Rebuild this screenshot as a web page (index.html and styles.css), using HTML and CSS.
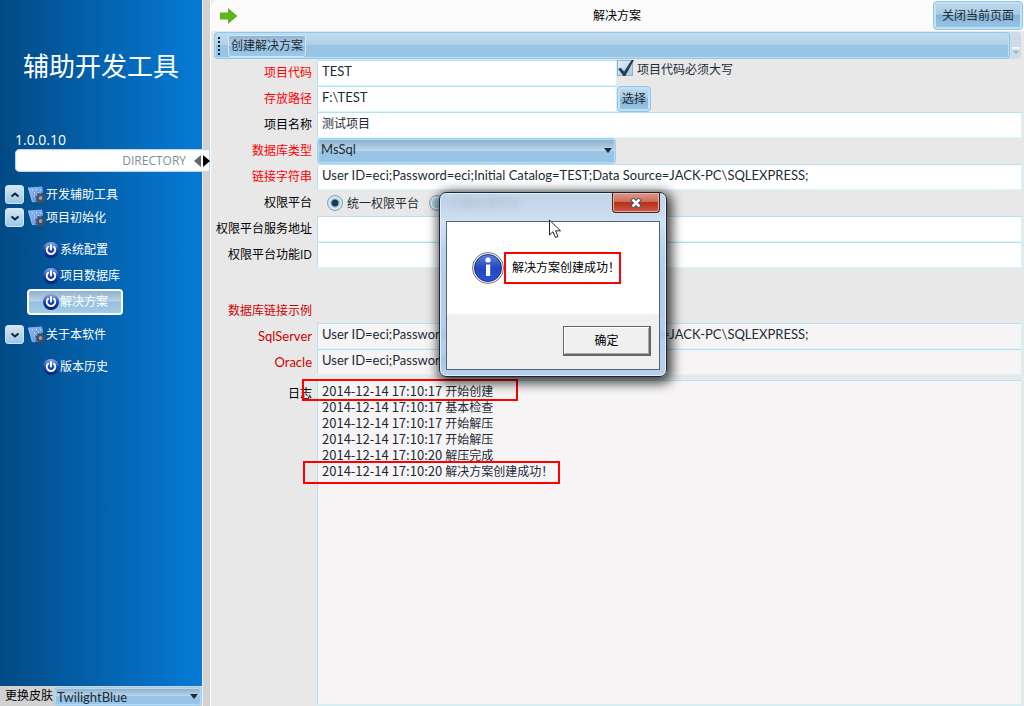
FILE: index.html
```html
<!DOCTYPE html>
<html lang="zh-CN">
<head>
  <meta charset="UTF-8">
  <meta name="viewport" content="width=device-width, initial-scale=1.0">
  <title>辅助开发工具</title>
  <link rel="stylesheet" href="styles.css">
</head>
<body>
  <!-- shared icons -->
  <svg class="defs" aria-hidden="true">
    <defs>
      <linearGradient id="orb" x1="0" y1="0" x2="0" y2="1">
        <stop offset="0" stop-color="#8fabea"/>
        <stop offset="0.5" stop-color="#1c44b5"/>
        <stop offset="1" stop-color="#0a1c76"/>
      </linearGradient>
      <linearGradient id="info" x1="0" y1="0" x2="0" y2="1">
        <stop offset="0" stop-color="#5c86e0"/>
        <stop offset="0.5" stop-color="#2346bd"/>
        <stop offset="1" stop-color="#2a55d8"/>
      </linearGradient>
      <linearGradient id="sheet" x1="0" y1="0" x2="1" y2="1">
        <stop offset="0" stop-color="#8fb8ee"/>
        <stop offset="1" stop-color="#5c92e2"/>
      </linearGradient>
    </defs>
    <symbol id="icon-power" viewBox="0 0 16 16">
      <circle cx="8" cy="8" r="8" fill="url(#orb)"/>
      <path d="M5 4.800a4.200 4.200 0 1 0 6 0" fill="none" stroke="#fff" stroke-width="2" stroke-linecap="round"/>
      <path d="M8 3v4.500" stroke="#fff" stroke-width="2" stroke-linecap="round"/>
    </symbol>
    <symbol id="icon-config" viewBox="0 0 18 18">
      <path d="M0 1.500l14-1 1 4-1 10-9 2z" fill="url(#sheet)"/>
      <path d="M.5 2l4 14" stroke="#a3bede" stroke-width="1"/>
      <path d="M4 4h1M8 3.500h1M12 4h1M6 7h1M10 6.500h1M6 10h1" stroke="#e4f0ff" stroke-width="1"/>
      <circle cx="12.500" cy="12" r="3" fill="none" stroke="#4b4d52" stroke-width="2.400"/>
      <circle cx="12.500" cy="12" r="4.700" fill="none" stroke="#4b4d52" stroke-width="1.400" stroke-dasharray="1.900 1.790"/>
      <circle cx="12.500" cy="12" r="1.800" fill="#7fa4dc"/>
    </symbol>
  </svg>

  <div class="app">
    <aside class="sidebar">
      <div class="nav-panel">
        <h1>辅助开发工具</h1>
        <p class="version">1.0.0.10</p>
        <div class="directory">
          <span>DIRECTORY</span>
          <svg width="16" height="12" viewBox="0 0 16 12" aria-hidden="true">
            <path d="M7 0v12L0 6z" fill="#666"/>
            <path d="M9 0v12l7-6z" fill="#000"/>
          </svg>
        </div>

        <nav class="tree">
          <div class="tree-group">
            <button class="expander" type="button" aria-label="展开"><svg width="10" height="10" viewBox="0 0 10 10"><path d="M1.5 6.5L5 3.5l3.5 3" fill="none" stroke="#123" stroke-width="2"/></svg></button>
            <svg class="group-icon"><use href="#icon-config"/></svg>
            <a href="#">开发辅助工具</a>
          </div>
          <div class="tree-group">
            <button class="expander" type="button" aria-label="收起"><svg width="10" height="10" viewBox="0 0 10 10"><path d="M1.5 3.5L5 6.5l3.5-3" fill="none" stroke="#123" stroke-width="2"/></svg></button>
            <svg class="group-icon"><use href="#icon-config"/></svg>
            <a href="#">项目初始化</a>
          </div>
          <ul class="tree-items">
            <li><a href="#"><svg><use href="#icon-power"/></svg>系统配置</a></li>
            <li><a href="#"><svg><use href="#icon-power"/></svg>项目数据库</a></li>
            <li><a class="selected" href="#"><svg><use href="#icon-power"/></svg>解决方案</a></li>
          </ul>
          <div class="tree-group">
            <button class="expander" type="button" aria-label="收起"><svg width="10" height="10" viewBox="0 0 10 10"><path d="M1.5 3.5L5 6.5l3.5-3" fill="none" stroke="#123" stroke-width="2"/></svg></button>
            <svg class="group-icon"><use href="#icon-config"/></svg>
            <a href="#">关于本软件</a>
          </div>
          <ul class="tree-items">
            <li><a href="#"><svg><use href="#icon-power"/></svg>版本历史</a></li>
          </ul>
        </nav>
      </div>

      <div class="skin">
        <label for="skin">更换皮肤</label>
        <div class="select">
          <select id="skin"><option>TwilightBlue</option></select>
        </div>
      </div>
    </aside>

    <div class="splitter"></div>

    <main>
      <header class="page-header">
        <svg class="arrow" width="18" height="16" viewBox="0 0 18 16" aria-hidden="true">
          <path d="M0 4.500h8V0l9.500 8L8 16v-4.500H0z" fill="#62b51c"/>
        </svg>
        <h2>解决方案</h2>
        <button class="glass" type="button">关闭当前页面</button>
      </header>

      <div class="toolbar-row">
        <div class="toolbar">
          <span class="grip"></span>
          <button type="button">创建解决方案</button>
        </div>
        <span class="overflow"><svg width="8" height="8" viewBox="0 0 8 8"><path d="M0 1h8" stroke="#fff" stroke-width="1.500"/><path d="M1 4h6L4 7z" fill="#aaa"/></svg></span>
      </div>

      <form class="fields">
        <label class="required" for="code">项目代码</label>
        <div class="cell">
          <input class="short" type="text" id="code" value="TEST">
          <span class="check"><input type="checkbox" id="upper" checked><label for="upper">项目代码必须大写</label></span>
        </div>

        <label class="required" for="path">存放路径</label>
        <div class="cell">
          <input class="short" type="text" id="path" value="F:\TEST">
          <button class="glass choose" type="button">选择</button>
        </div>

        <label for="name">项目名称</label>
        <input class="cjk" type="text" id="name" value="测试项目">

        <label class="required" for="dbtype">数据库类型</label>
        <div class="select short">
          <select id="dbtype"><option>MsSql</option></select>
        </div>

        <label class="required" for="conn">链接字符串</label>
        <input type="text" id="conn" value="User ID=eci;Password=eci;Initial Catalog=TEST;Data Source=JACK-PC\SQLEXPRESS;">

        <span class="caption">权限平台</span>
        <div class="cell radios">
          <input type="radio" name="platform" id="unified" checked><label for="unified">统一权限平台</label>
          <input type="radio" name="platform" id="builtin"><label for="builtin">内置权限平台</label>
        </div>

        <label for="service">权限平台服务地址</label>
        <input type="text" id="service">

        <label for="function">权限平台功能ID</label>
        <input type="text" id="function">

        <span class="caption example">数据库链接示例</span>

        <label class="sample latin" for="sqlserver">SqlServer</label>
        <input class="readonly" type="text" id="sqlserver" readonly value="User ID=eci;Password=eci;Initial Catalog=TEST;Data Source=JACK-PC\SQLEXPRESS;">

        <label class="sample latin" for="oracle">Oracle</label>
        <input class="readonly" type="text" id="oracle" readonly value="User ID=eci;Password=eci;Data Source=ORCL;">

        <span class="caption log-caption" id="log-label">日志</span>
        <ol class="log" role="log" aria-labelledby="log-label">
          <li class="mark-first"><time>2014-12-14 17:10:17</time> 开始创建</li>
          <li><time>2014-12-14 17:10:17</time> 基本检查</li>
          <li><time>2014-12-14 17:10:17</time> 开始解压</li>
          <li><time>2014-12-14 17:10:17</time> 开始解压</li>
          <li><time>2014-12-14 17:10:20</time> 解压完成</li>
          <li class="mark-last"><time>2014-12-14 17:10:20</time> 解决方案创建成功！</li>
        </ol>
      </form>
    </main>
  </div>

  <div class="dialog" role="alertdialog" aria-labelledby="message">
    <div class="titlebar">
      <button class="close" type="button" aria-label="关闭">
        <svg width="12" height="10" viewBox="0 0 12 10"><path d="M2 1l8 8M10 1L2 9" stroke="#444b5a" stroke-width="4.500"/><path d="M2.500 1.500l7 7M9.500 1.500l-7 7" stroke="#fff" stroke-width="2.500"/></svg>
      </button>
    </div>
    <div class="dialog-body">
      <div class="message">
        <svg width="32" height="32" viewBox="0 0 32 32" aria-hidden="true">
          <circle cx="16" cy="16" r="15.500" fill="#f4f4f4" stroke="#777"/>
          <circle cx="16" cy="16" r="13.500" fill="url(#info)" stroke="#1a2f8c"/>
          <circle cx="16" cy="8" r="2.600" fill="#fff"/>
          <path d="M14 12.500h4.200V24h-4.200z" fill="#fff"/>
        </svg>
        <p id="message">解决方案创建成功！</p>
      </div>
      <div class="actions"><button type="button">确定</button></div>
    </div>
  </div>

  <svg class="cursor" width="13" height="20" viewBox="0 0 13 20" aria-hidden="true">
    <path d="M.5 1v15l3.500-3.300 2.500 5.800 2.500-1.100-2.500-5.600h5z" fill="#fff" stroke="#222"/>
  </svg>
</body>
</html>
```

FILE: styles.css
```css
*, *::before, *::after {
  margin: 0;
  padding: 0;
  box-sizing: border-box;
}

body {
  font-family: "Open Sans", "Noto Sans CJK SC", sans-serif;
  font-size: 12px;
  line-height: 16px;
  color: #000;
  background: #e8e8e8;
}

button, input, select {
  font: inherit;
  color: #1c2a35;
}

a {
  color: #fff;
  text-decoration: none;
}

.defs {
  position: absolute;
  width: 0;
  height: 0;
}

.app {
  display: flex;
  min-height: 100vh;
}

/* sidebar */
.sidebar {
  width: 202px;
  display: flex;
  flex-direction: column;
  background: #d2d2d2;
}

.nav-panel {
  flex: 1;
  background: linear-gradient(to right, #024a85, #057bd6);
  color: #fff;
}

h1 {
  padding: 46px 0 0 23px;
  font-size: 26px;
  font-weight: normal;
  line-height: 40px;
}

.version {
  margin-top: 45px;
  padding-left: 15px;
  font-size: 14px;
  line-height: 18px;
}

.directory {
  position: relative;
  display: flex;
  align-items: center;
  justify-content: flex-end;
  gap: 8px;
  height: 23px;
  margin: 0 -8px 0 15px;
  background: #fff;
  border-radius: 5px 0 0 5px;
  box-shadow: inset 0 0 1px 1px #b5cfe8;
  color: #7b9096;
}

.tree {
  padding: 11px 0 0 5px;
}

.tree-group {
  display: flex;
  align-items: center;
  height: 23px;
}

.expander {
  display: flex;
  align-items: center;
  justify-content: center;
  width: 19px;
  height: 19px;
  border: 1px solid #cfe6f6;
  border-radius: 3px;
  background: linear-gradient(#d3e6f3, #9cc8e6);
}

.group-icon {
  width: 18px;
  height: 18px;
  margin-left: 4px;
}

.tree-items {
  list-style: none;
  padding: 8px 0 8px 22px;
}

.tree-items a {
  display: flex;
  align-items: center;
  gap: 1px;
  width: 96px;
  height: 26px;
  padding-left: 16px;
}

.tree-items svg {
  width: 16px;
  height: 16px;
}

.tree-items .selected {
  padding-left: 14px;
  border: 2px solid #fff;
  border-radius: 4px;
  background: linear-gradient(#8fb0cb, #b9d2e4 45%, #94c0e0 50%, #a3cbe8);
}

.skin {
  display: flex;
  align-items: center;
  height: 20px;
  padding-left: 5px;
}

.skin .select {
  flex: 1;
  height: 19px;
  margin-left: 1px;
}

/* glossy drop-down */
.select {
  position: relative;
  height: 26px;
}

.select select {
  display: block;
  width: 100%;
  height: 100%;
  padding: 0 3px 5px;
  appearance: none;
  border: 1px solid #9bd0f2;
  border-radius: 4px;
  box-shadow: inset 0 0 0 1px #b9daf0;
  background: linear-gradient(#86acc8, #bcd7ea 48%, #98c5e6 50%, #98c5e6);
  font-family: Lato, "Noto Sans CJK SC", sans-serif;
  font-size: 13px;
  line-height: 18px;
}

.skin .select select {
  padding: 0 2px;
}

.select::after {
  content: "";
  position: absolute;
  right: 4px;
  top: 40%;
  border: 4px solid transparent;
  border-top: 5px solid #1c2a35;
  border-bottom: 0;
}

.splitter {
  width: 9px;
  background: #d2d2d2;
  border-left: 1px solid #eee;
  border-right: 1px solid #fff;
}

/* page */
main {
  flex: 1;
  min-width: 0;
  display: flex;
  flex-direction: column;
}

.page-header {
  display: grid;
  grid-template-columns: 90px 1fr 90px;
  align-items: center;
  height: 32px;
  padding-right: 1px;
  background: #fbfbfb;
  border-radius: 6px 0 0 0;
  border-bottom: 1px solid #e8e8e8;
}

.arrow {
  margin-left: 9px;
}

h2 {
  font-size: 12px;
  font-weight: normal;
  text-align: center;
}

.glass {
  height: 29px;
  border: 1px solid #8fc6ec;
  border-radius: 4px;
  box-shadow: inset 0 0 0 2px #c4e0f4;
  background: linear-gradient(#c3dbec, #a9cbe4 45%, #86b3d5 50%, #9ac8e8);
  white-space: nowrap;
}

.toolbar-row {
  display: flex;
  height: 27px;
  margin: 0 3px;
  background: #cddbe6;
  border-radius: 4px;
}

.toolbar {
  flex: 1;
  display: flex;
  align-items: center;
  padding-left: 3px;
  border: 1px solid #8ec6ec;
  border-radius: 4px;
  box-shadow: inset 0 0 0 1px #b9def5;
  background: linear-gradient(#c2dbec, #b0d0e8 48%, #98c5e6 50%, #98c5e6);
}

.grip {
  width: 2px;
  height: 18px;
  background: repeating-linear-gradient(#123 0 2px, transparent 2px 4px);
}

.toolbar button {
  height: 22px;
  margin-left: 8px;
  padding: 0 2px;
  border: 1px solid #d3e8f6;
  border-radius: 3px;
  background: linear-gradient(#8fb4d0, #b4d1e6 45%, #94bedf 50%, #9ac8e8);
}

.overflow {
  align-self: flex-end;
  width: 11px;
  height: 12px;
  padding-left: 2px;
  line-height: 8px;
}

/* form */
.fields {
  flex: 1;
  display: grid;
  grid-template-columns: 101px 1fr;
  grid-template-rows: repeat(8, 26px) 55px 26px 26px 1fr;
  column-gap: 5px;
  padding: 1px 2px 1px 0;
}

.fields > label, .caption {
  padding-top: 5px;
  text-align: right;
  white-space: nowrap;
}

.fields > .required {
  color: #f00;
}

.fields > .sample, .caption.example {
  color: #d00000;
}

.fields > .latin {
  font-family: Lato, sans-serif;
  font-size: 13px;
}

.fields input[type="text"] {
  width: 100%;
  height: 26px;
  padding: 0 4px 5px;
  border: 1px solid #b8e0f5;
  border-right-color: #c8f8fc;
  border-bottom-color: #d5fafd;
  background: #fff;
  font-family: Lato, "Noto Sans CJK SC", sans-serif;
  font-size: 13px;
}

.fields input.cjk {
  font-size: 12px;
}

.fields input.readonly {
  background: #f6f4f5;
}

.fields .short, .fields input.short {
  flex: none;
  width: 300px;
}

.fields .select.short {
  width: 299px;
}

.cell {
  display: flex;
}

.choose {
  width: 34px;
  height: 26px;
}

.check {
  display: flex;
  gap: 4px;
}

.check label {
  padding-top: 2px;
  color: #1c2a35;
  white-space: nowrap;
}

.check input {
  position: relative;
  width: 16px;
  height: 16px;
  appearance: none;
  border: 1px solid #8fb2cc;
  background: linear-gradient(135deg, #e5eff6, #a9cbe2);
}

.check input:checked::after {
  content: "";
  position: absolute;
  left: 0;
  top: -1px;
  width: 16px;
  height: 16px;
  background: #2b3f50;
  clip-path: polygon(0 55%, 18% 50%, 38% 72%, 85% 0, 100% 0, 46% 100%, 34% 100%);
}

.radios {
  align-items: center;
  padding-left: 10px;
}

.radios input {
  width: 16px;
  height: 16px;
  appearance: none;
  border: 1px solid #7ba3bf;
  border-radius: 50%;
  box-shadow: inset 0 0 0 2px #d8eaf6;
  background: #a9cce4;
}

.radios input:checked {
  background: radial-gradient(circle, #24384a 3px, #a9cce4 4px);
}

.radios label {
  margin: 2px 10px 0 4px;
  color: #1c2a35;
}

.caption.example {
  grid-column: 1;
  padding-top: 35px;
}

.fields .example + label {
  grid-column: 1;
}

.log-caption {
  padding-top: 11px;
}

.log {
  margin-top: 5px;
  padding: 3px 4px;
  list-style: none;
  border: 1px solid #b8e0f5;
  border-right-color: #c8f8fc;
  border-bottom-color: #c8f8fc;
  background: #f6f4f5;
  color: #1c2a35;
}

.log li {
  position: relative;
  height: 16px;
}

time {
  font-family: "Noto Sans CJK SC", sans-serif;
  font-size: 13px;
  line-height: 14px;
}

/* red highlight frames */
.mark-first::before, .mark-last::before {
  content: "";
  position: absolute;
  left: -20px;
  top: -5px;
  width: 216px;
  height: 22px;
  border: 2px solid #f00;
}

.mark-last::before {
  left: -19px;
  top: -3px;
  width: 257px;
  height: 23px;
}

/* message box */
.dialog {
  position: absolute;
  left: 439px;
  top: 192px;
  width: 228px;
  padding: 0 6px 6px;
  border: 1px solid #1d2630;
  border-radius: 7px;
  background: linear-gradient(rgba(185, 208, 232, 0.85), rgba(200, 220, 240, 0.85) 30px, rgba(170, 200, 235, 0.85) 60px);
  backdrop-filter: blur(3px);
  box-shadow: inset 0 0 0 1px #e3effa, 2px 3px 12px 3px rgba(0, 0, 0, 0.75);
}

.titlebar {
  display: flex;
  justify-content: flex-end;
  height: 28px;
}

.close {
  display: flex;
  align-items: center;
  justify-content: center;
  width: 48px;
  height: 20px;
  border: 1px solid #43202a;
  border-top: 0;
  border-radius: 0 0 4px 4px;
  box-shadow: inset 0 0 0 1px #e9b0a4;
  background: linear-gradient(#dc9a8b, #cf6a55 48%, #b4301b 50%, #cf5a42);
}

.dialog-body {
  border: 1px solid #52647a;
  background: #fff;
}

.message {
  display: flex;
  align-items: center;
  height: 92px;
  padding-left: 25px;
}

.message p {
  height: 32px;
  padding: 6px 0 0 6px;
  width: 117px;
  border: 2px solid #f00;
  white-space: nowrap;
}

.actions {
  display: flex;
  justify-content: flex-end;
  padding: 12px 8px 13px;
  background: #f0f0f0;
}

.actions button {
  width: 88px;
  height: 30px;
  border: 1px solid #666;
  border-right: 2px solid #666;
  border-bottom: 2px solid #666;
  box-shadow: inset 1px 1px 0 #fff, inset -1px -1px 0 #aaa;
  background: #f0f0f0;
  color: #000;
}

.cursor {
  position: absolute;
  left: 549px;
  top: 219px;
}
```
